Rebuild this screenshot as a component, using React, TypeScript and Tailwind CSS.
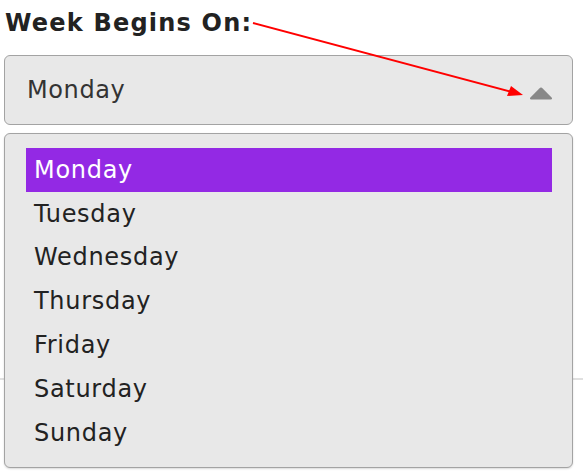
import React from "react";

const days = ["Monday", "Tuesday", "Wednesday", "Thursday", "Friday", "Saturday", "Sunday"];

export default function App() {
  return (
    <div
      className="relative h-[473px] w-[583px] overflow-hidden bg-white text-[#222]"
      style={{ fontFamily: '"DejaVu Sans", "Liberation Sans", sans-serif' }}
    >
      <div className="pl-[5px] pt-[9px] text-[24px] font-bold leading-[28px] text-[#222] tracking-[1.2px]">
        Week Begins On:
      </div>
      <div className="relative ml-[4px] mt-[18px] mr-[10px]">
        <div className="flex h-[70px] items-center justify-between rounded-[6px] border border-[#a3a3a3] bg-[#e8e8e8] pl-[22px] pr-[19px]">
          <span className="text-[24px] leading-none tracking-[0.6px] text-[#333]">Monday</span>
          <svg width="24" height="13" viewBox="0 0 24 13" className="mt-[6px]">
            <path d="M10.3 1.4 Q12 -0.3 13.7 1.4 L22.6 10.6 Q23.8 12.4 21.6 12.4 L2.4 12.4 Q0.2 12.4 1.4 10.6 Z" fill="#888" />
          </svg>
        </div>
        <div className="absolute left-0 right-0 top-[78px] z-10 h-[335px] rounded-[6px] border border-[#a3a3a3] bg-[#e8e8e8] pl-[21px] pr-[20px] pt-[14px] shadow-[0_1px_2px_rgba(0,0,0,0.15)]">
          {days.map((d, i) => (
            <div
              key={d}
              className={
                i === 0
                  ? "flex h-[43.8px] items-center bg-[#9329e4] pl-[8px] text-[24px] tracking-[0.7px] text-white"
                  : "flex h-[43.8px] items-center pl-[8px] text-[24px] tracking-[0.7px] text-[#222]"
              }
            >
              {d}
            </div>
          ))}
        </div>
      </div>
      <div className="mt-[253px] h-[2px] w-full bg-[#e0e0e0]" />
      <svg className="pointer-events-none absolute left-0 top-0 z-20" width="583" height="473">
        <line x1="253" y1="23" x2="512" y2="92" stroke="#f00" strokeWidth="2" />
        <polygon points="523,95 507,96 511,86" fill="#f00" />
      </svg>
    </div>
  );
}
